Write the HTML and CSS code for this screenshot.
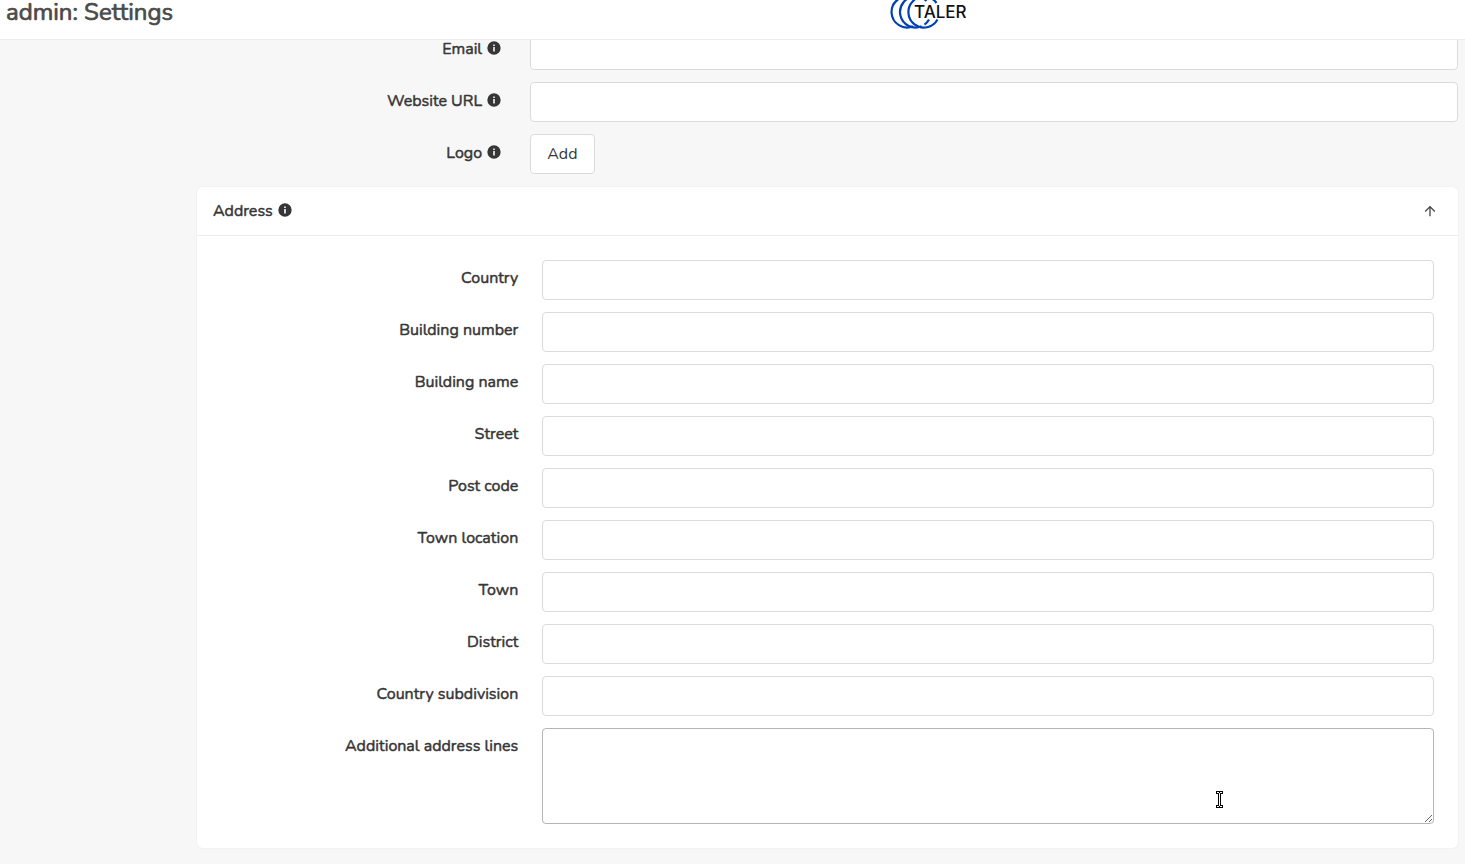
FILE: index.html
```
<!DOCTYPE html>
<html lang="en">
<head>
<meta charset="utf-8">
<title>admin: Settings</title>
<link rel="stylesheet" href="styles.css">
</head>
<body>
<svg class="sprite" aria-hidden="true">
  <symbol id="info" viewBox="0 0 24 24"><path fill="currentColor" d="M13.200 9h-2.400V6.600h2.400m0 10.800h-2.400v-6.800h2.400M12 2A10 10 0 0 0 2 12a10 10 0 0 0 10 10 10 10 0 0 0 10-10A10 10 0 0 0 12 2z"/></symbol>
</svg>
<header class="topbar">
  <h1 class="title">admin: Settings</h1>
  <a class="logo" href="#" aria-label="Taler">
    <svg viewBox="0 0 84 32" width="84" height="32">
      <g fill="none" stroke="#0042b3" stroke-width="2.200">
        <path d="M25-3A15.500 15.500 0 1 0 27 26.300"/>
        <path d="M40.500 1A15.500 15.500 0 0 0 29.500-3.500A15.500 15.500 0 1 0 35.500 26.300M38.500 24.600A15.500 15.500 0 0 0 43 19.500"/>
        <path d="M50.500 3A15.500 15.500 0 1 0 51.500 19.500"/>
      </g>
      <text class="logo-text" x="28" y="18">TALER</text>
    </svg>
  </a>
</header>
<main class="page">
  <form class="form">
    <div class="field">
      <label class="label" for="email">Email <svg class="info"><use href="#info"/></svg></label>
      <div class="control"><input class="input" id="email" type="email"></div>
    </div>
    <div class="field">
      <label class="label" for="website">Website URL <svg class="info"><use href="#info"/></svg></label>
      <div class="control"><input class="input" id="website" type="url"></div>
    </div>
    <div class="field">
      <label class="label" for="logo">Logo <svg class="info"><use href="#info"/></svg></label>
      <div class="control"><button class="button" id="logo" type="button">Add</button></div>
    </div>
    <section class="card">
      <header class="card-header">
        <h2 class="card-title">Address <svg class="info"><use href="#info"/></svg></h2>
        <button class="toggle" type="button" aria-label="Collapse address">
          <svg viewBox="0 0 24 24" width="16" height="16"><path fill="currentColor" d="M13 20h-2V8l-5.500 5.500-1.420-1.420L12 4.160l7.920 7.920-1.420 1.420L13 8v12z"/></svg>
        </button>
      </header>
      <div class="card-content">
        <div class="field"><label class="label" for="country">Country</label><div class="control"><input class="input" id="country" type="text"></div></div>
        <div class="field"><label class="label" for="number">Building number</label><div class="control"><input class="input" id="number" type="text"></div></div>
        <div class="field"><label class="label" for="name">Building name</label><div class="control"><input class="input" id="name" type="text"></div></div>
        <div class="field"><label class="label" for="street">Street</label><div class="control"><input class="input" id="street" type="text"></div></div>
        <div class="field"><label class="label" for="post">Post code</label><div class="control"><input class="input" id="post" type="text"></div></div>
        <div class="field"><label class="label" for="location">Town location</label><div class="control"><input class="input" id="location" type="text"></div></div>
        <div class="field"><label class="label" for="town">Town</label><div class="control"><input class="input" id="town" type="text"></div></div>
        <div class="field"><label class="label" for="district">District</label><div class="control"><input class="input" id="district" type="text"></div></div>
        <div class="field"><label class="label" for="subdivision">Country subdivision</label><div class="control"><input class="input" id="subdivision" type="text"></div></div>
        <div class="field"><label class="label" for="lines">Additional address lines</label>
          <div class="control control-area">
            <textarea class="input textarea" id="lines"></textarea>
            <svg class="cursor" viewBox="0 0 7 17" width="7" height="17" aria-hidden="true">
              <path d="M0 0h7v3H5v11h2v3H0v-3h2V3H0z" fill="#000"/>
              <path d="M1 1h2v1h1V1h2v1H4v13h2v1H4v-1H3v1H1v-1h2V2H1z" fill="#fff"/>
            </svg>
          </div>
        </div>
      </div>
    </section>
  </form>
</main>
</body>
</html>
```
FILE: styles.css
```
* { box-sizing: border-box; }
body {
  margin: 0;
  background: #f7f7f7;
  color: #363636;
  font: 16px/24px Nunito, Lato, "Open Sans", sans-serif;
}
.sprite { display: none; }
.topbar {
  position: sticky;
  top: 0;
  z-index: 1;
  display: grid;
  grid-template-columns: minmax(0, 886px) 1fr;
  height: 40px;
  background: #fff;
  border-bottom: 1px solid #ededed;
}
.title {
  margin: 0;
  padding-left: 6px;
  font-size: 24px;
  line-height: 24px;
  font-weight: 400;
  color: #4a4a4a;
}
.title, .label, .card-title { -webkit-text-stroke: 0.03em currentColor; }
.logo { height: 32px; }
.logo-text {
  font: 500 17px Inter, sans-serif;
  fill: #111;
  stroke: #fff;
  stroke-width: 2px;
  paint-order: stroke;
}
.page {
  margin-top: -10px;
  padding: 0 7px 15px 197px;
}
.form, .card-content { display: grid; gap: 12px; }
.field {
  display: grid;
  grid-template-columns: minmax(0, 1fr) minmax(0, 3fr);
  column-gap: 24px;
}
.label {
  padding-top: 6px;
  text-align: right;
  font-weight: 400;
}
.form > .field > .label { padding: 7px 4px 0 0; }
.info {
  width: 16px;
  height: 16px;
  vertical-align: -2px;
}
.control { display: flex; }
.input {
  width: 100%;
  height: 40px;
  padding: 8px 12px;
  border: 1px solid #dbdbdb;
  border-radius: 4px;
  background: #fff;
  color: inherit;
  font: inherit;
}
.textarea {
  height: 96px;
  border-color: #b5b5b5;
  resize: vertical;
}
.control-area { position: relative; }
.cursor {
  position: absolute;
  right: 211px;
  bottom: 16px;
}
.button {
  height: 40px;
  padding: 0 16px;
  border: 1px solid #dbdbdb;
  border-radius: 4px;
  background: #fff;
  color: #363636;
  font: inherit;
}
.card {
  margin-top: 1px;
  background: #fff;
  border-radius: 6px;
  box-shadow: 0 0 0 1px #f2f2f2;
}
.card-header {
  display: flex;
  align-items: center;
  justify-content: space-between;
  height: 49px;
  padding: 0 16px;
  border-bottom: 1px solid #ededed;
}
.card-title { margin: 0; font-size: 16px; font-weight: 400; }
.toggle {
  display: flex;
  padding: 4px;
  border: 0;
  background: none;
  color: #4a4a4a;
}
.card-content { padding: 24px; }
```
